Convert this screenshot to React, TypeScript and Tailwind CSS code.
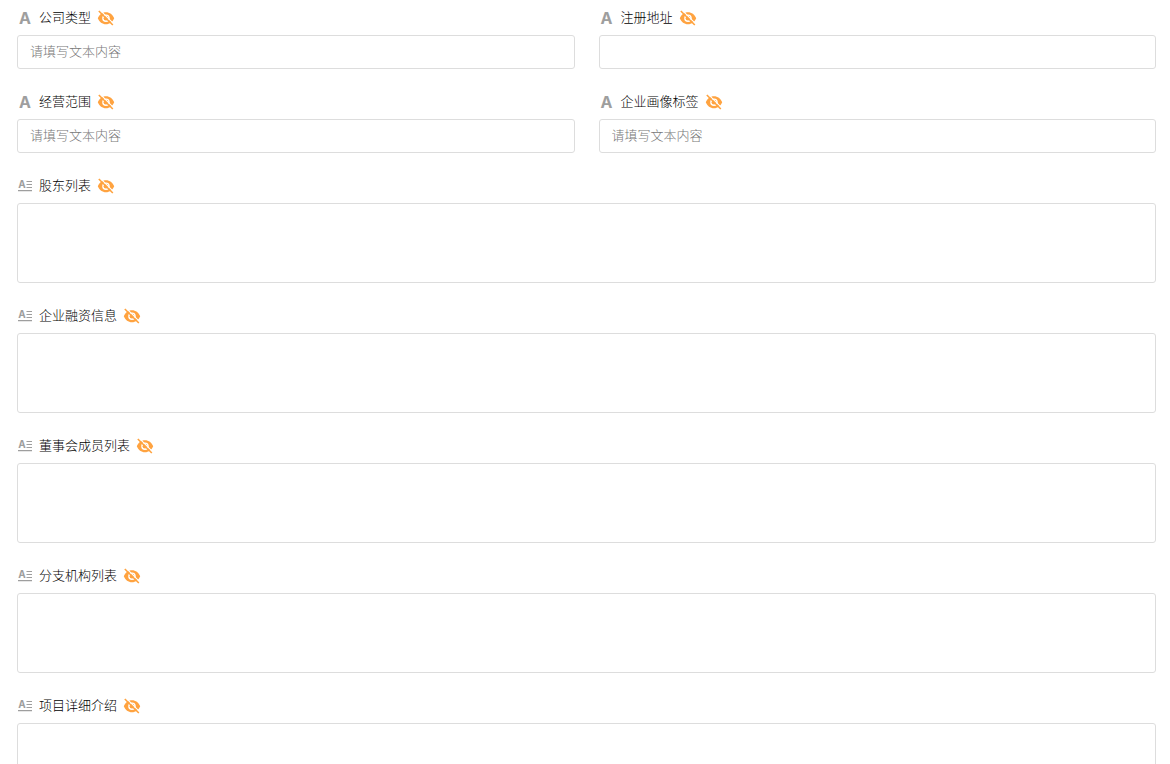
interface FieldProps {
  id: string;
  label: string;
  placeholder?: string;
  multiline?: boolean;
}

const fields: FieldProps[] = [
  { id: 'company-type', label: '公司类型', placeholder: '请填写文本内容' },
  { id: 'address', label: '注册地址' },
  { id: 'business-scope', label: '经营范围', placeholder: '请填写文本内容' },
  { id: 'tags', label: '企业画像标签', placeholder: '请填写文本内容' },
  { id: 'shareholders', label: '股东列表', multiline: true },
  { id: 'financing', label: '企业融资信息', multiline: true },
  { id: 'board', label: '董事会成员列表', multiline: true },
  { id: 'branches', label: '分支机构列表', multiline: true },
  { id: 'project-detail', label: '项目详细介绍', multiline: true },
];

function TextIcon() {
  return (
    <span
      aria-hidden="true"
      className="w-4 text-center font-['Inter',sans-serif] text-[16px] leading-[18px] font-bold text-[#9e9e9e]"
    >
      A
    </span>
  );
}

function RichTextIcon() {
  return (
    <svg width="16" height="18" viewBox="0 0 16 18" fill="#9e9e9e" className="overflow-visible" aria-hidden="true">
      <text x="5" y="11" textAnchor="middle" className="font-['Inter',sans-serif] text-[10px] font-bold">
        A
      </text>
      <path d="M9.5 4H15v1H9.500zM9.500 7H15v1H9.500zM9.500 10H15v1H9.500zM1 13h14v1.300H1z" />
    </svg>
  );
}

function HiddenIcon() {
  return (
    <svg width="18" height="18" viewBox="0 0 18 18" fill="none" aria-hidden="true">
      <path
        fill="#ffa340"
        fillRule="evenodd"
        d="M9 3.2c3.700 0 6.700 2.300 8.200 6-1.500 3.700-4.500 6-8.200 6s-6.700-2.300-8.200-6c1.500-3.700 4.500-6 8.200-6zM9 5.400a3.800 3.800 0 1 0 0 7.600 3.800 3.800 0 0 0 0-7.600z"
      />
      <circle cx="9" cy="9.2" r="2.4" fill="#ffa340" />
      <path d="M3 1.200l14 14" stroke="#fff" strokeWidth="1.200" />
      <path d="M1.800 2l14 14" stroke="#ffa340" strokeWidth="1.600" />
    </svg>
  );
}

function Field({ id, label, placeholder, multiline }: FieldProps) {
  return (
    <div className={multiline ? 'col-span-2' : ''}>
      <div className="mb-2 flex h-[18px] items-start gap-[6px]">
        {multiline ? <RichTextIcon /> : <TextIcon />}
        <label htmlFor={id} className="text-[13px] leading-4 font-light text-black">
          {label}
        </label>
        <HiddenIcon />
      </div>
      {multiline ? (
        <textarea
          id={id}
          className="block h-20 w-full resize-none rounded-[3px] border border-[#ddd] bg-white px-3 py-2 text-[13px] text-[#333] outline-none focus:border-blue-500"
        />
      ) : (
        <input
          id={id}
          type="text"
          placeholder={placeholder}
          className="block h-[34px] w-full rounded-[3px] border border-[#ddd] bg-white px-3 pb-1 text-[13px] text-[#333] outline-none placeholder:font-light placeholder:text-[#777] focus:border-blue-500"
        />
      )}
    </div>
  );
}

export default function App() {
  return (
    <div className="h-screen overflow-hidden bg-white font-['Noto_Sans_CJK_SC',sans-serif]">
      <form className="grid grid-cols-2 gap-6 pt-[9px] pr-[14px] pl-[17px]">
        {fields.map((field) => (
          <Field key={field.id} {...field} />
        ))}
      </form>
    </div>
  );
}
